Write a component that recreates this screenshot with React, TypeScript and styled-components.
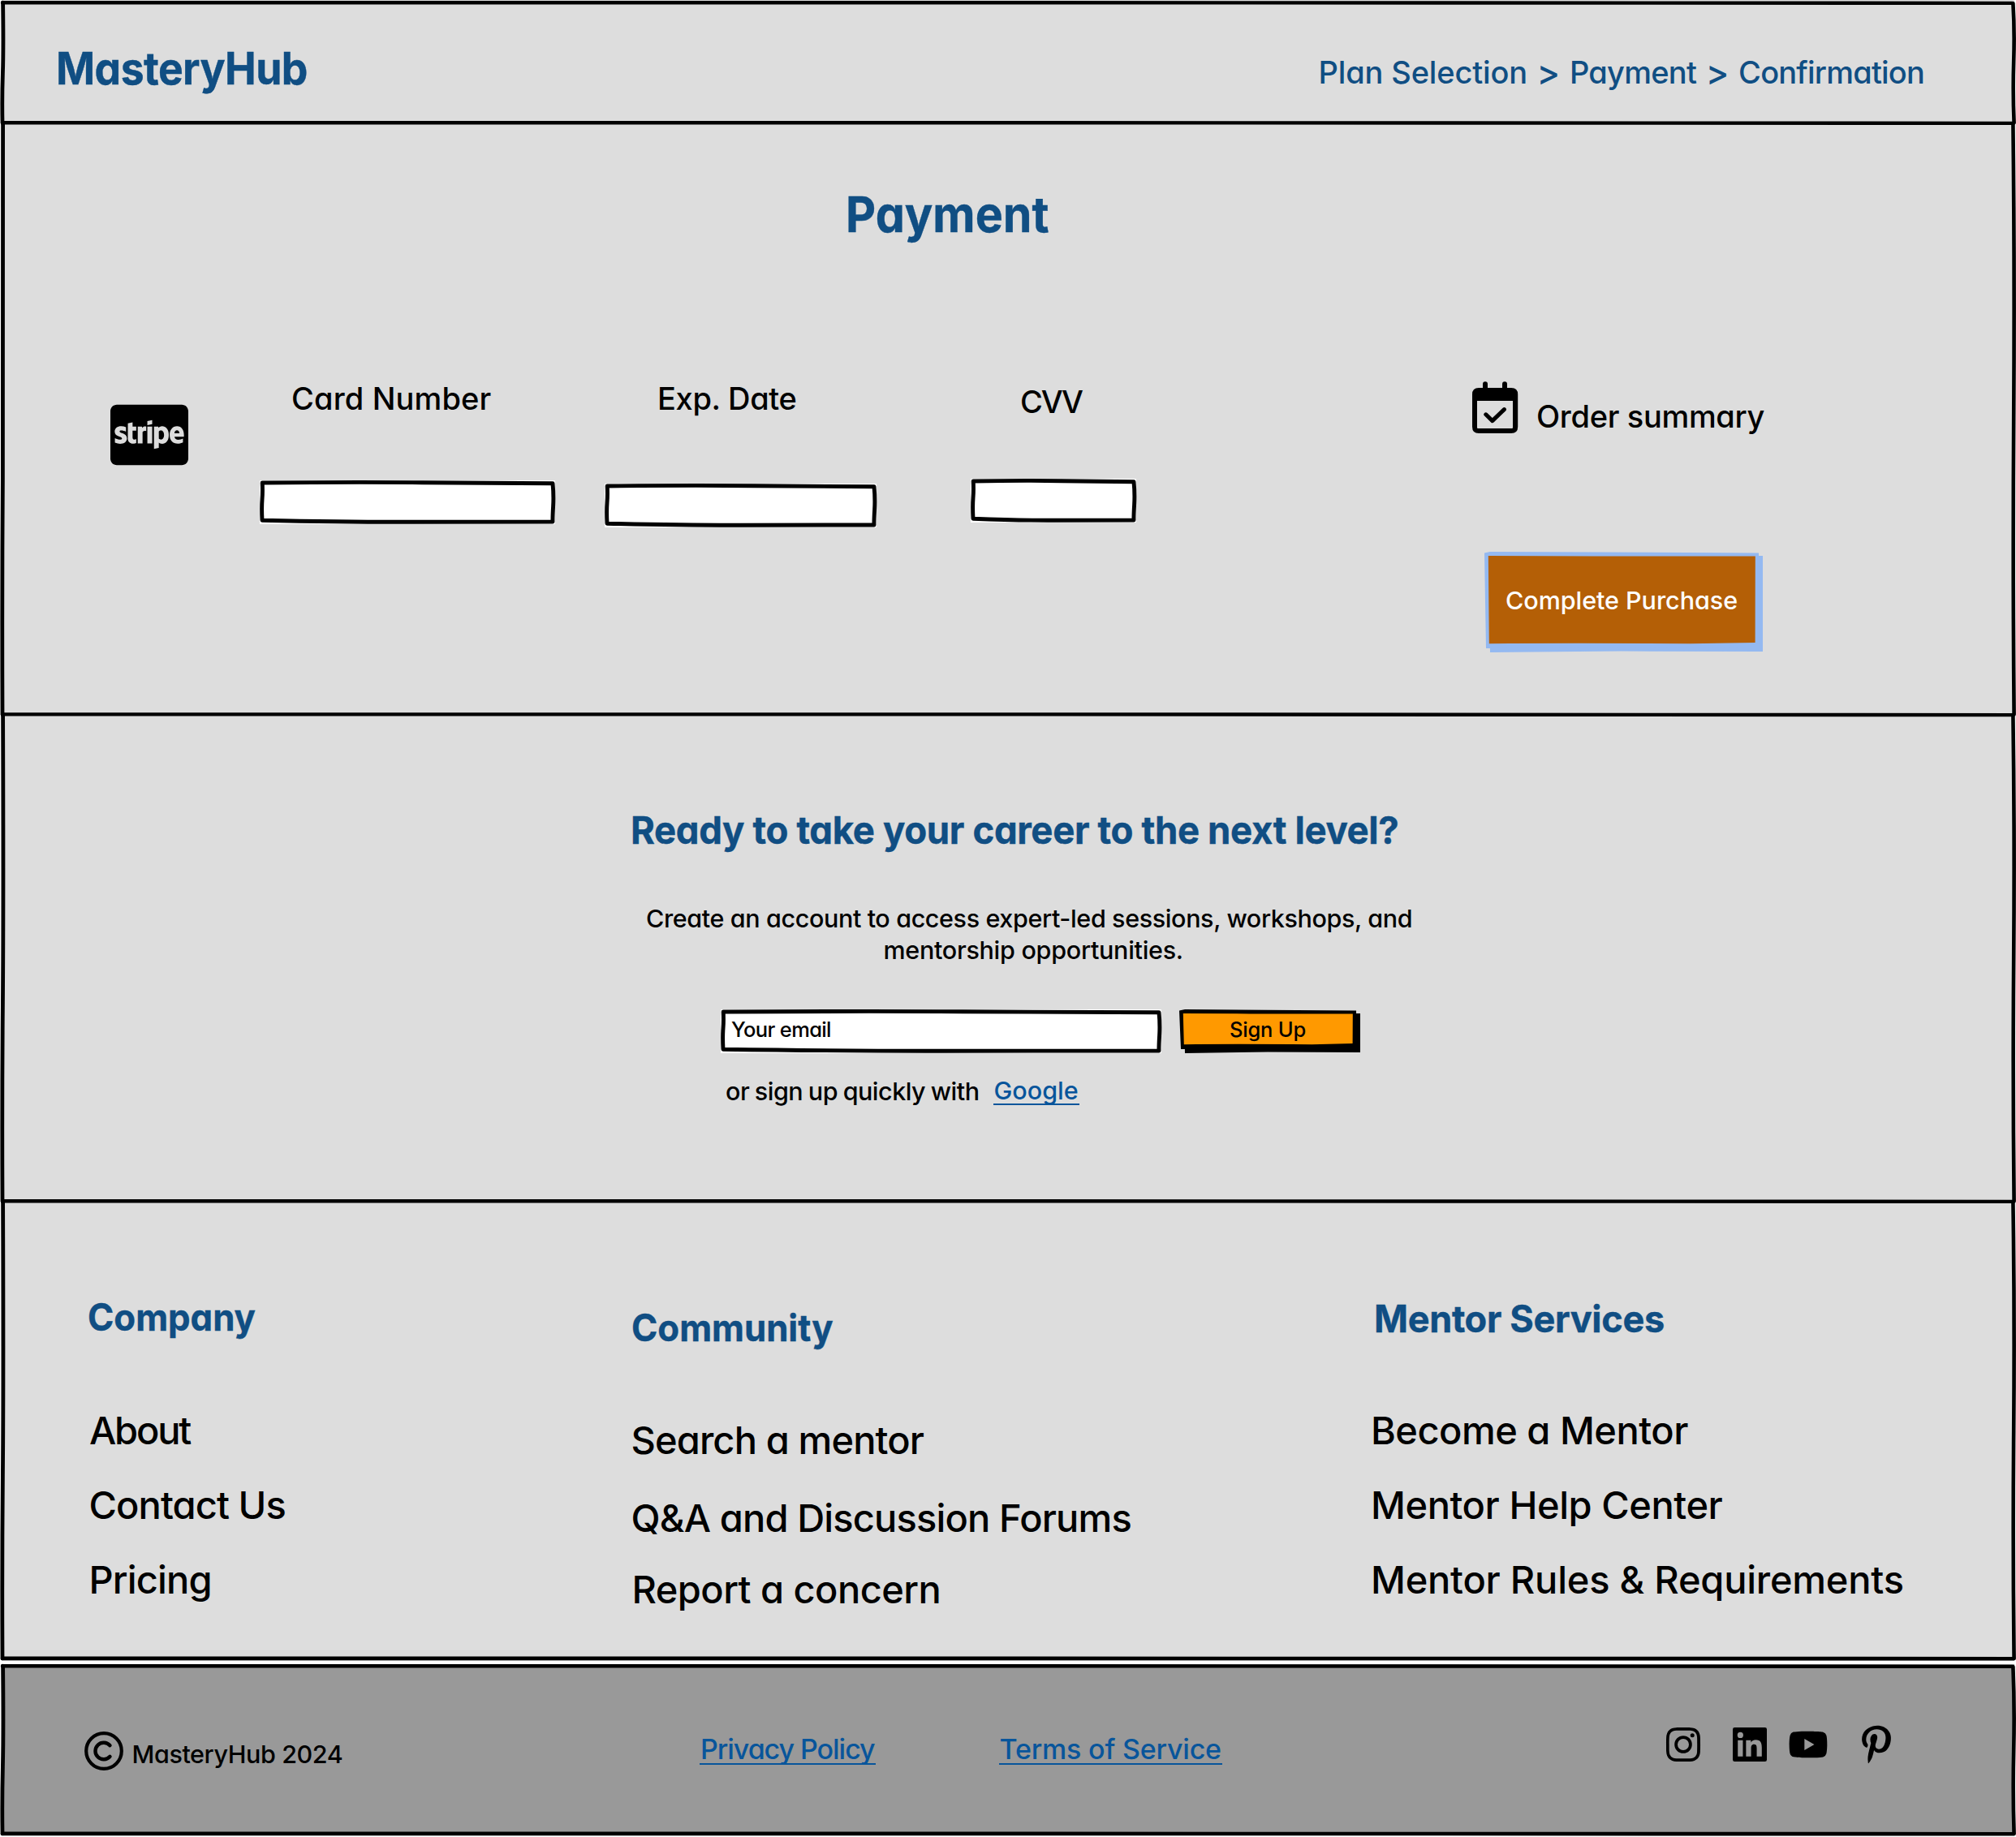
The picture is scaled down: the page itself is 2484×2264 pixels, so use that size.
import React from "react";
import styled, { createGlobalStyle } from "styled-components";
import { FaCcStripe } from "react-icons/fa6";
import {
  BiLogoInstagram,
  BiLogoLinkedinSquare,
  BiLogoPinterestAlt,
  BiLogoYoutube,
} from "react-icons/bi";

const NAVY = "#104e83";
const LINK = "#08559b";
const PANEL = "#dddddd";

const GlobalStyle = createGlobalStyle`
  * { box-sizing: border-box; }
  body {
    margin: 0;
    background: #ffffff;
    color: #000000;
    font-family: Inter, "Liberation Sans", sans-serif;
    font-feature-settings: "cv11";
    font-weight: 500;
  }
  h1, h2, h3, p, ul { margin: 0; padding: 0; }
  h1, h2, h3 { -webkit-text-stroke: 0.4px currentColor; }
  ul { list-style: none; }
  button, input { font: inherit; color: inherit; }
`;

/* ---------- hand-drawn outlines ---------- */

const Outline = styled.svg`
  position: absolute;
  inset: 0;
  width: 100%;
  height: 100%;
  overflow: visible;
  pointer-events: none;
`;

function PanelFrame({ h, top, closed }: { h: number; top: number; closed?: boolean }) {
  const b = closed ? h - 2.6 : h + 0.5;
  return (
    <Outline viewBox={`0 0 2480 ${h}`} preserveAspectRatio="none" fill="none" stroke="#000" strokeLinecap="round">
      <path d={`M1 ${top} Q620 ${top - 0.9} 1240 ${top} T2478 ${top + 0.7}`} strokeWidth="4.4" />
      <path d={`M1.6 ${top} Q2.4 ${h * 0.4} 1.4 ${h * 0.6} T1 ${b}`} strokeWidth="4.8" />
      <path d={`M2478.4 ${top + 1} Q2480.4 ${h * 0.25} 2479.2 ${h * 0.5} T2479.6 ${b}`} strokeWidth="4.6" />
      {closed && <path d={`M1 ${b} Q620 ${b + 0.8} 1240 ${b} T2479 ${b + 0.3}`} strokeWidth="4.6" />}
    </Outline>
  );
}

function FieldFrame({ w }: { w: number }) {
  return (
    <Outline viewBox={`0 0 ${w} 54`} preserveAspectRatio="none" fill="none" stroke="#000" strokeLinejoin="round" strokeLinecap="round">
      <path
        strokeWidth="4.9"
        d={`M3.2 3 Q${w * 0.3} 2 ${w * 0.55} 2.7 T${w - 3} 3.8
            Q${w - 1.6} 18 ${w - 2.4} 32 T${w - 3} 51
            Q${w * 0.7} 51 ${w * 0.5} 51.2 T3 49.2
            Q2.2 34 3 24 T3.2 3`}
      />
    </Outline>
  );
}

function ButtonFrame({ w, h, line, fill }: { w: number; h: number; line: string; fill: string }) {
  return (
    <Outline viewBox={`0 0 ${w} ${h}`} preserveAspectRatio="none">
      <path fill={line} d={`M6 5 L${w + 5} 5 L${w + 5} ${h + 4} L${w * 0.5} ${h + 3.6} L7 ${h + 5} Z`} />
      <path fill={line} d={`M0 1.4 L7 0 L${w} 1.4 L${w + 0.4} ${h - 1} L${w * 0.5} ${h - 0.6} L2 ${h} Z`} />
      <path
        fill={fill}
        d={`M4.8 5 L${w * 0.4} 5.4 L${w - 4.2} 5.6 L${w - 4.4} ${h - 6.9} L${w * 0.75} ${h - 5.8} Q${w * 0.3} ${h - 6.6} 5.8 ${h - 5.8} Z`}
      />
    </Outline>
  );
}

/* ---------- page and panels ---------- */

const Page = styled.div`
  width: 2484px;
  height: 2264px;
  padding: 0 2px;
  display: flex;
  flex-direction: column;
  overflow: hidden;
`;

const Panel = styled.section<{ $h: number }>`
  position: relative;
  flex: none;
  height: ${(p) => p.$h}px;
  background: ${PANEL};
`;

const Header = styled(Panel)`
  display: flex;
  justify-content: space-between;
  align-items: flex-start;
  padding: 57px 111px 0 67px;
`;

const Brand = styled.div`
  color: ${NAVY};
  font-size: 55px;
  font-weight: 700;
  line-height: 54px;
  letter-spacing: -0.6px;
  transform: scaleX(0.94);
  transform-origin: left center;
  -webkit-text-stroke: 0.4px currentColor;
`;

const Breadcrumb = styled.nav`
  display: flex;
  margin-top: 12.5px;
  color: ${NAVY};
  font-size: 38px;
  line-height: 38px;
  white-space: nowrap;
`;

const Crumb = styled.span<{ $ls: number }>`
  letter-spacing: ${(p) => p.$ls}px;
`;

const CrumbSeparator = styled.span`
  width: 52px;
  font-size: 43px;
  text-align: center;
`;

const PaymentPanel = styled(Panel)`
  display: flex;
  flex-direction: column;
  padding-top: 82.5px;
`;

const PageTitle = styled.h1`
  margin-left: 1040px;
  color: ${NAVY};
  font-size: 61px;
  line-height: 60px;
  letter-spacing: 0px;
  transform: scaleX(0.94);
  transform-origin: left center;
`;

const PaymentRow = styled.div`
  display: flex;
  align-items: flex-start;
  margin-top: 176.5px;
  padding-left: 134px;
`;

const StripeMark = styled.div`
  width: 96px;
  height: 76px;
  margin-top: 28px;
  display: flex;
  align-items: center;
  justify-content: center;
  font-size: 96px;
  svg { flex: none; }
`;

const Field = styled.label<{ $w: number; $ml: number; $top: number; $indent: number; $gap: number }>`
  display: flex;
  flex-direction: column;
  gap: ${(p) => p.$gap}px;
  width: ${(p) => p.$w}px;
  margin-left: ${(p) => p.$ml}px;
  padding-top: ${(p) => p.$top}px;
  > span {
    padding-left: ${(p) => p.$indent}px;
  }
`;

const FieldLabel = styled.span<{ $ls: number }>`
  font-size: 38px;
  line-height: 38px;
  letter-spacing: ${(p) => p.$ls}px;
  white-space: nowrap;
`;

const InputBox = styled.div<{ $w: number }>`
  position: relative;
  width: ${(p) => p.$w}px;
  height: 54px;
  background: #ffffff;
`;

const Input = styled.input`
  display: block;
  width: 100%;
  height: 49px;
  padding: 0 13px;
  border: 0;
  background: transparent;
  font-size: 25.5px;
  letter-spacing: -0.63px;
  outline: none;
  &::placeholder { color: #000; opacity: 1; }
`;

const OrderColumn = styled.div`
  display: flex;
  flex-direction: column;
  align-items: flex-start;
  margin-left: 414px;
`;

const OrderHeading = styled.div`
  display: flex;
  align-items: flex-start;
  gap: 22px;
  height: 64px;
`;

const OrderLabel = styled.span`
  margin-top: 24px;
  font-size: 38px;
  line-height: 38px;
  letter-spacing: -0.32px;
  white-space: nowrap;
`;

const SketchButton = styled.button<{ $w: number; $h: number }>`
  position: relative;
  flex: none;
  width: ${(p) => p.$w}px;
  height: ${(p) => p.$h}px;
  padding: 0;
  border: 0;
  background: transparent;
  display: flex;
  justify-content: center;
`;

const PurchaseButton = styled(SketchButton)`
  margin: 146px 0 0 15px;
`;

const ButtonText = styled.span<{ $size: number; $top: number; $ls: number; $color: string }>`
  position: relative;
  margin-top: ${(p) => p.$top}px;
  color: ${(p) => p.$color};
  font-size: ${(p) => p.$size}px;
  line-height: ${(p) => p.$size}px;
  letter-spacing: ${(p) => p.$ls}px;
  white-space: nowrap;
`;

const SignupPanel = styled(Panel)`
  display: flex;
  flex-direction: column;
  align-items: flex-start;
  padding-top: 119px;
`;

const SignupTitle = styled.h2`
  margin-left: 775px;
  color: ${NAVY};
  font-size: 47px;
  line-height: 47px;
  letter-spacing: -0.38px;
  transform: scaleX(0.97);
  transform-origin: left center;
  white-space: nowrap;
`;

const SignupText = styled.p`
  margin: 66px 0 0 794px;
  font-size: 30.5px;
  line-height: 39px;
  letter-spacing: -0.38px;
  text-align: center;
  white-space: nowrap;
`;

const LastLine = styled.span`
  display: block;
  padding-left: 10px;
  letter-spacing: -0.28px;
`;

const SignupForm = styled.div`
  display: flex;
  align-items: flex-start;
  gap: 22px;
  margin: 54px 0 0 886px;
`;

const OauthRow = styled.div`
  display: flex;
  gap: 17px;
  margin: 30.5px 0 0 892px;
  font-size: 30.5px;
  line-height: 31px;
  letter-spacing: -0.5px;
  word-spacing: -1px;
  white-space: nowrap;
`;

const TextLink = styled.a<{ $size: number; $h: number; $ls: number }>`
  height: ${(p) => p.$h}px;
  padding: 0 1px;
  border-bottom: 2.2px solid ${LINK};
  color: ${LINK};
  font-size: ${(p) => p.$size}px;
  line-height: ${(p) => p.$size}px;
  letter-spacing: ${(p) => p.$ls}px;
  text-decoration: none;
  white-space: nowrap;
`;

const LinksPanel = styled(Panel)`
  display: grid;
  grid-template-columns: 669.5px 911.5px 1fr;
  align-items: start;
  padding-left: 106px;
`;

const LinkColumn = styled.div<{ $top: number }>`
  padding-top: ${(p) => p.$top}px;
`;

const ColumnTitle = styled.h3<{ $ls: number; $sx: number; $indent?: number }>`
  margin-left: ${(p) => p.$indent ?? 0}px;
  color: ${NAVY};
  font-size: 46.5px;
  line-height: 46.5px;
  letter-spacing: ${(p) => p.$ls}px;
  transform: scaleX(${(p) => p.$sx});
  transform-origin: left center;
`;

const ColumnItem = styled.li<{ $gap: number; $ls: number; $indent?: number }>`
  margin-top: ${(p) => p.$gap}px;
  padding-left: ${(p) => p.$indent ?? 0}px;
  font-size: 47px;
  line-height: 47px;
  letter-spacing: ${(p) => p.$ls}px;
  white-space: nowrap;
`;

const Footer = styled(Panel)`
  margin-top: 4px;
  display: flex;
  align-items: flex-start;
  background: #999999;
`;

const Copyright = styled.div`
  display: flex;
  align-items: flex-start;
  gap: 10.5px;
  width: 860px;
  padding: 83.5px 0 0 102px;
`;

const CopyrightText = styled.span`
  margin-top: 11.5px;
  font-size: 30.5px;
  line-height: 31px;
  letter-spacing: -0.4px;
  white-space: nowrap;
`;

const Legal = styled.nav`
  display: flex;
  gap: 152px;
  width: 980px;
  padding-top: 88.5px;
`;

const Social = styled.div`
  display: flex;
  align-items: center;
  height: 62px;
  margin: 68.5px 0 0 203.5px;
`;

const SocialIcon = styled.span<{ $ml?: number; $size?: number }>`
  display: flex;
  margin-left: ${(p) => p.$ml ?? 0}px;
  font-size: ${(p) => p.$size ?? 56}px;
`;

function CalendarCheck() {
  return (
    <svg width="57" height="65" viewBox="0 0 57 65">
      <path d="M16 3.2V12M40 3.2V12" stroke="#000" strokeWidth="6" strokeLinecap="round" />
      <path
        fillRule="evenodd"
        d="M8 8H48Q56.200 8 56.200 16V56Q56.200 64 48 64H8Q0 64 0 56V16Q0 8 8 8ZM6 24V57Q6 58 7 58H49Q50 58 50 57V24Z"
      />
      <path d="M16.800 40.800L24.800 48.600L39.400 34.600" fill="none" stroke="#000" strokeWidth="5" strokeLinecap="round" strokeLinejoin="round" />
    </svg>
  );
}

function CopyrightSign() {
  return (
    <svg width="48" height="48" viewBox="0 0 48 48" fill="none" stroke="#000" strokeLinecap="round">
      <circle cx="24" cy="24" r="21.800" strokeWidth="4.200" />
      <path d="M31.500 17.200A10.300 10.300 0 1 0 31.500 30.800" strokeWidth="4.400" />
    </svg>
  );
}

export default function App() {
  return (
    <>
      <GlobalStyle />
      <Page>
        <Header as="header" $h={151}>
          <PanelFrame h={151} top={3.2} />
          <Brand>MasteryHub</Brand>
          <Breadcrumb>
            <Crumb $ls={-0.15}>Plan Selection</Crumb>
            <CrumbSeparator>&gt;</CrumbSeparator>
            <Crumb $ls={-0.75}>Payment</Crumb>
            <CrumbSeparator>&gt;</CrumbSeparator>
            <Crumb $ls={-0.8}>Confirmation</Crumb>
          </Breadcrumb>
        </Header>

        <PaymentPanel $h={729}>
          <PanelFrame h={729} top={0.2} />
          <PageTitle>Payment</PageTitle>
          <PaymentRow>
            <StripeMark>
              <FaCcStripe />
            </StripeMark>
            <Field $w={364} $ml={88} $top={1.8} $indent={39} $gap={82}>
              <FieldLabel $ls={0.14}>Card Number</FieldLabel>
              <InputBox $w={364}>
                <FieldFrame w={364} />
                <Input aria-label="Card Number" />
              </InputBox>
            </Field>
            <Field $w={335} $ml={60.5} $top={1.8} $indent={65.5} $gap={86}>
              <FieldLabel $ls={-0.35}>Exp. Date</FieldLabel>
              <InputBox $w={335}>
                <FieldFrame w={335} />
                <Input aria-label="Exp. Date" />
              </InputBox>
            </Field>
            <Field $w={204} $ml={116.5} $top={5.7} $indent={61} $gap={76.3}>
              <FieldLabel $ls={-2.19}>CVV</FieldLabel>
              <InputBox $w={204}>
                <FieldFrame w={204} />
                <Input aria-label="CVV" />
              </InputBox>
            </Field>
            <OrderColumn>
              <OrderHeading>
                <CalendarCheck />
                <OrderLabel>Order summary</OrderLabel>
              </OrderHeading>
              <PurchaseButton $w={338} $h={119}>
                <ButtonFrame w={338} h={119} line="#94b9f1" fill="#b45f06" />
                <ButtonText $size={30.5} $top={44.5} $ls={-0.04} $color="#ffffff">
                  Complete Purchase
                </ButtonText>
              </PurchaseButton>
            </OrderColumn>
          </PaymentRow>
        </PaymentPanel>

        <SignupPanel $h={600}>
          <PanelFrame h={600} top={0.4} />
          <SignupTitle>Ready to take your career to the next level?</SignupTitle>
          <SignupText>
            Create an account to access expert-led sessions, workshops, and
            <LastLine>mentorship opportunities.</LastLine>
          </SignupText>
          <SignupForm>
            <InputBox $w={543}>
              <FieldFrame w={543} />
              <Input placeholder="Your email" />
            </InputBox>
            <SketchButton $w={218} $h={49}>
              <ButtonFrame w={218} h={49} line="#000000" fill="#ff9900" />
              <ButtonText $size={25.5} $top={12} $ls={-0.2} $color="#000000">
                Sign Up
              </ButtonText>
            </SketchButton>
          </SignupForm>
          <OauthRow>
            <span>or sign up quickly with</span>
            <TextLink $size={30.5} $h={33.5} $ls={0}>
              Google
            </TextLink>
          </OauthRow>
        </SignupPanel>

        <LinksPanel $h={566.5}>
          <PanelFrame h={566.5} top={0.2} closed />
          <LinkColumn $top={120}>
            <ColumnTitle $ls={0} $sx={0.94}>Company</ColumnTitle>
            <ul>
              <ColumnItem $gap={92.5} $ls={-2.2} $indent={2}>About</ColumnItem>
              <ColumnItem $gap={45} $ls={-0.91} $indent={1.5}>Contact Us</ColumnItem>
              <ColumnItem $gap={45} $ls={-0.85} $indent={1.5}>Pricing</ColumnItem>
            </ul>
          </LinkColumn>
          <LinkColumn $top={133.2}>
            <ColumnTitle $ls={0} $sx={0.94}>Community</ColumnTitle>
            <ul>
              <ColumnItem $gap={91.4} $ls={-0.86}>Search a mentor</ColumnItem>
              <ColumnItem $gap={49.3} $ls={-0.85}>Q&amp;A and Discussion Forums</ColumnItem>
              <ColumnItem $gap={40.8} $ls={-0.55} $indent={1}>Report a concern</ColumnItem>
            </ul>
          </LinkColumn>
          <LinkColumn $top={121.8}>
            <ColumnTitle $ls={-0.37} $sx={0.97} $indent={4}>Mentor Services</ColumnTitle>
            <ul>
              <ColumnItem $gap={90.7} $ls={-0.5}>Become a Mentor</ColumnItem>
              <ColumnItem $gap={45} $ls={-0.43}>Mentor Help Center</ColumnItem>
              <ColumnItem $gap={44.7} $ls={-0.22}>Mentor Rules &amp; Requirements</ColumnItem>
            </ul>
          </LinkColumn>
        </LinksPanel>

        <Footer as="footer" $h={211.5}>
          <PanelFrame h={211.5} top={2.2} closed />
          <Copyright>
            <CopyrightSign />
            <CopyrightText>MasteryHub 2024</CopyrightText>
          </Copyright>
          <Legal>
            <TextLink $size={34} $h={35.5} $ls={-1.05}>Privacy Policy</TextLink>
            <TextLink $size={34} $h={35.5} $ls={-0.2}>Terms of Service</TextLink>
          </Legal>
          <Social>
            <SocialIcon><BiLogoInstagram /></SocialIcon>
            <SocialIcon $ml={26}><BiLogoLinkedinSquare /></SocialIcon>
            <SocialIcon $ml={16}><BiLogoYoutube /></SocialIcon>
            <SocialIcon $ml={25} $size={62}><BiLogoPinterestAlt /></SocialIcon>
          </Social>
        </Footer>
      </Page>
    </>
  );
}
